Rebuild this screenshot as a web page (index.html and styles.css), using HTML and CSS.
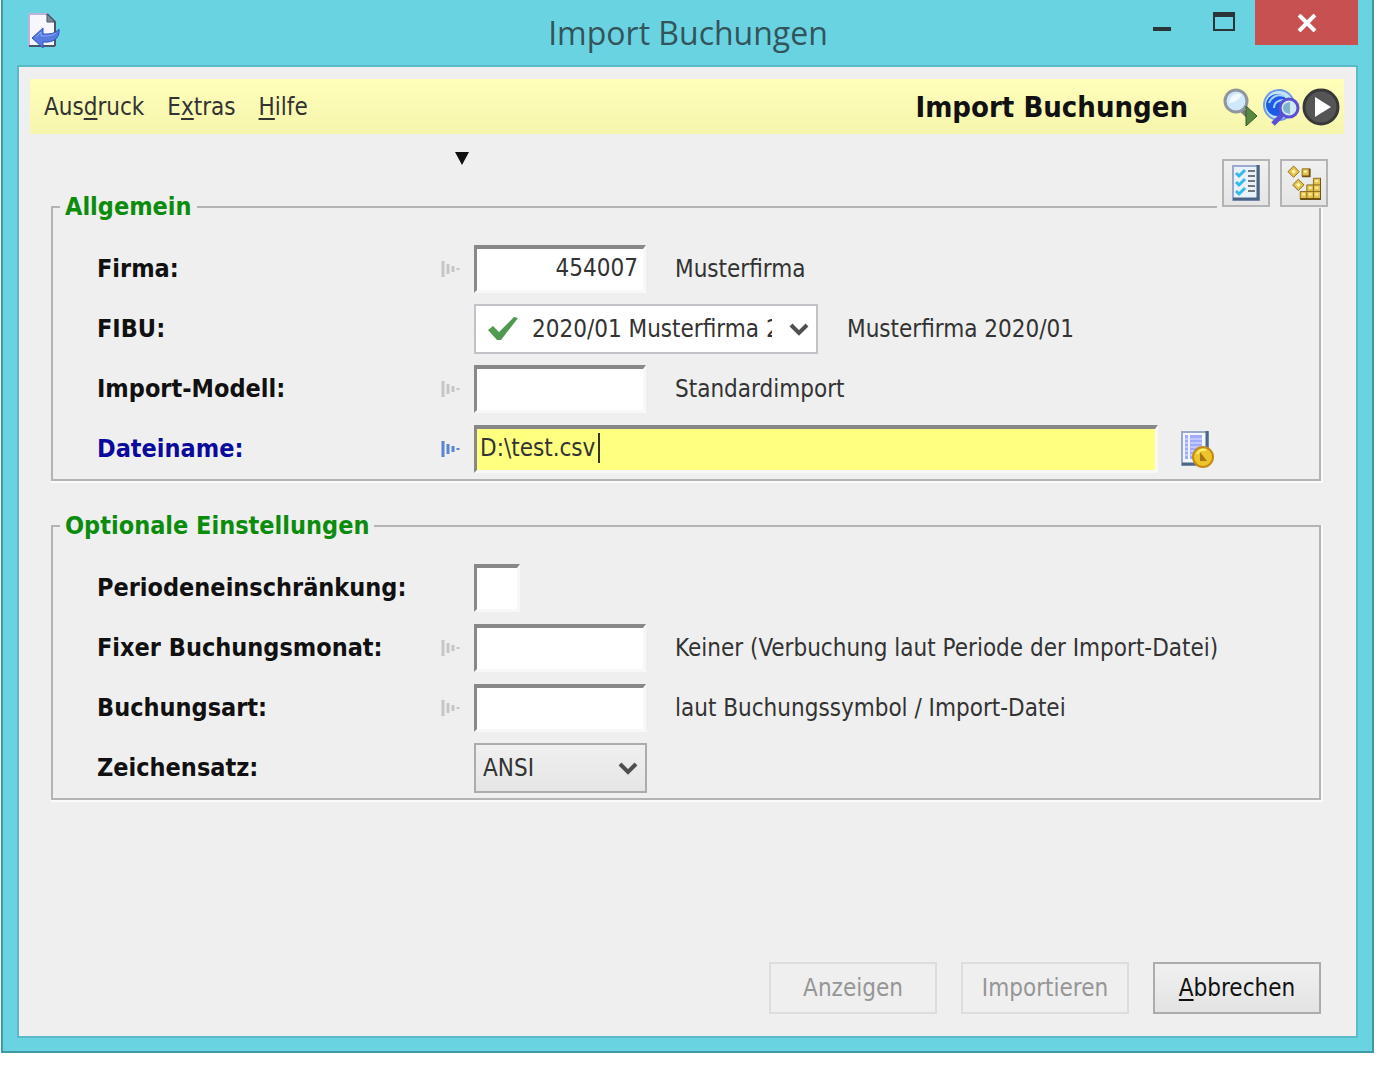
FILE: index.html
```html
<!DOCTYPE html>
<html lang="de">
<head>
    <meta charset="UTF-8">
    <meta name="viewport" content="width=device-width, initial-scale=1.0">
    <title>Import Buchungen</title>
    <link rel="stylesheet" href="styles.css">
</head>
<body>
    <!-- shared symbols -->
    <svg class="symbols" aria-hidden="true">
        <symbol id="hint" viewBox="0 0 20 20">
            <path d="M3 2v16M8 5v10M13 7v6M18 9v2" stroke="currentColor" stroke-width="3" fill="none"/>
        </symbol>
        <symbol id="chevron" viewBox="0 0 20 16">
            <path d="M2 3l8 8 8-8" stroke="#505050" stroke-width="4" fill="none"/>
        </symbol>
    </svg>

    <div class="window">
        <header class="titlebar">
            <svg class="app-icon" viewBox="0 0 34 38">
                <path d="M2 2h18l8 8v24H2z" fill="#f6f6fc" stroke="#b9b4dc" stroke-width="2"/>
                <path d="M20 2l8 8v24" fill="none" stroke="#48566a" stroke-width="2"/>
                <path d="M20 2v8h8z" fill="#7d8896" stroke="#48566a"/>
                <path d="M2 34h26" fill="none" stroke="#48566a" stroke-width="2"/>
                <path d="M5 26l11-10v6c7 0 12 0 16-5c1 9-5 14-16 13v6z" fill="#587be2" stroke="#3155b8"/>
                <path d="M9 25l5-5v4c6 0 11 0 15-3" fill="none" stroke="#8ba8f6"/>
            </svg>
            <h1 class="window-title">Import Buchungen</h1>
            <div class="window-controls">
                <button class="control minimize" aria-label="Minimieren">
                    <svg viewBox="0 0 20 6"><path d="M1 1h18v4H1z" fill="#2b3437"/></svg>
                </button>
                <button class="control maximize" aria-label="Maximieren">
                    <svg viewBox="0 0 24 20"><path d="M2 2v16h20V2z" fill="none" stroke="#2b3437" stroke-width="2"/><path d="M1 0h22v5H1z" fill="#2b3437"/></svg>
                </button>
                <button class="control close" aria-label="Schließen">
                    <svg viewBox="0 0 20 18"><path d="M2 1l16 16M18 1L2 17" stroke="#fff" stroke-width="4"/></svg>
                </button>
            </div>
        </header>

        <main class="client">
            <div class="menubar">
                <nav class="menu">
                    <a href="#">Aus<u>d</u>ruck</a>
                    <a href="#">E<u>x</u>tras</a>
                    <a href="#"><u>H</u>ilfe</a>
                </nav>
                <h2 class="form-title">Import Buchungen</h2>
                <div class="menu-icons">
                    <button class="icon-btn" aria-label="Suche starten">
                        <svg viewBox="0 0 38 38">
                            <path d="M20 22l7 7" stroke="#77797c" stroke-width="5"/>
                            <circle cx="14" cy="13" r="11" fill="#cfe8fb" stroke="#8f969d" stroke-width="3"/>
                            <path d="M7 15c1-7 6-10 13-9c-2 5-6 8-13 9z" fill="#f1faff"/>
                            <path d="M24 18l11 10-11 10z" fill="#568a40" stroke="#38542f"/>
                        </svg>
                    </button>
                    <button class="icon-btn" aria-label="Globale Suche">
                        <svg viewBox="0 0 38 38">
                            <circle cx="17" cy="17" r="15" fill="#c4e4f6" stroke="#6d9be6" stroke-width="2"/>
                            <circle cx="15" cy="17" r="11" fill="#1c5be8"/>
                            <path d="M7 15c2-6 8-9 15-7M12 20c0-5 4-8 10-8" stroke="#a9d2fb" stroke-width="2" fill="none"/>
                            <path d="M20 27L11 36" stroke="#5b50d4" stroke-width="5"/>
                            <circle cx="27" cy="20" r="9" fill="#cfe8f2" stroke="#5a50d2" stroke-width="3"/>
                            <path d="M28 14v12c-5-1-7-3-7-6s2-5 7-6z" fill="#7fb0cd"/>
                        </svg>
                    </button>
                    <button class="icon-btn" aria-label="Ausführen">
                        <svg viewBox="0 0 38 38">
                            <circle cx="19" cy="19" r="17" fill="#555" stroke="#383838" stroke-width="3"/>
                            <path d="M13 9l16 10-16 10z" fill="#fff"/>
                        </svg>
                    </button>
                </div>
            </div>

            <div class="toolbar-row">
                <span class="marker"></span>
                <div class="toolbar">
                    <button class="tool" aria-label="Checkliste">
                        <svg viewBox="0 0 28 36">
                            <path d="M1 1h26v34H1z" fill="#e9f2fb" stroke="#9ba8cf" stroke-width="2"/>
                            <path d="M26 0v34H1" fill="none" stroke="#4a6486" stroke-width="3"/>
                            <path d="M4 8l3 3 6-6M4 17l3 3 6-6M4 26l3 3 6-6" stroke="#34b9ec" stroke-width="3" fill="none"/>
                            <path d="M16 6h7M16 11h7M16 16h7M16 21h7M16 26h7" stroke="#74777c" stroke-width="2"/>
                        </svg>
                    </button>
                    <button class="tool" aria-label="Bausteine">
                        <svg viewBox="0 0 36 38">
                            <g fill="#e3c350" stroke="#8b6a1d">
                                <path d="M7 1l6 6-6 6-6-6z"/>
                                <path d="M12 15l6 6-6 6-6-6z"/>
                                <path d="M16 4h8v8h-8z"/>
                                <path d="M28 14h8v22H14v-8h7v-7h7z"/>
                            </g>
                            <path d="M28 21h8M21 28h15M21 28v8M28 21v15" stroke="#8b6a1d"/>
                            <path d="M30 17h3M30 24h3M23 24h3M16 31h3M23 31h3M30 31h3M18 7h3M5 7h4M7 5v4M10 21h4M12 19v4" stroke="#fff6ae" stroke-width="2"/>
                            <path d="M24 4v8h-8M36 14v22H14" fill="none" stroke="#6d5216" stroke-width="2"/>
                        </svg>
                    </button>
                </div>
            </div>

            <form class="form">
                <fieldset class="group">
                    <legend>Allgemein</legend>
                    <div class="row">
                        <label for="firma">Firma:</label>
                        <svg class="hint"><use href="#hint"/></svg>
                        <input class="field number" id="firma" type="text" value="454007">
                        <span class="note">Musterfirma</span>
                    </div>
                    <div class="row">
                        <label for="fibu">FIBU:</label>
                        <span class="hint"></span>
                        <div class="select-wrap fibu">
                            <svg class="check" viewBox="0 0 30 26"><path d="M0 14l5-4 6 6L26 1l4 1-17 22h-4z" fill="#4f9a50"/></svg>
                            <select id="fibu">
                                <option>2020/01 Musterfirma 2020/01</option>
                            </select>
                            <svg class="chevron"><use href="#chevron"/></svg>
                        </div>
                        <span class="note">Musterfirma 2020/01</span>
                    </div>
                    <div class="row">
                        <label for="modell">Import-Modell:</label>
                        <svg class="hint"><use href="#hint"/></svg>
                        <input class="field" id="modell" type="text">
                        <span class="note">Standardimport</span>
                    </div>
                    <div class="row active">
                        <label for="datei">Dateiname:</label>
                        <svg class="hint"><use href="#hint"/></svg>
                        <div class="file-wrap">
                            <input class="field" id="datei" type="text" value="D:\test.csv">
                            <span class="caret"></span>
                        </div>
                        <button type="button" class="browse" aria-label="Datei auswählen">
                            <svg viewBox="0 0 34 38">
                                <path d="M2 2h26v33H2z" fill="#f3f6ff" stroke="#9aaac4" stroke-width="2"/>
                                <path d="M27 1v33H2" fill="none" stroke="#4c6688" stroke-width="3"/>
                                <path d="M5 5h3v24H5zM10 5h12v24H10z" fill="#a0aaff"/>
                                <path d="M5 9h17M5 13h17M5 17h17M5 21h17M5 25h17" stroke="#e2e6ff"/>
                                <circle cx="23" cy="27" r="10" fill="#edc52b" stroke="#c28b17" stroke-width="2"/>
                                <path d="M20 22v9h7z" fill="#a97415"/>
                                <path d="M17 24c2-4 5-5 9-4" stroke="#fff27a" stroke-width="2" fill="none"/>
                            </svg>
                        </button>
                    </div>
                </fieldset>

                <fieldset class="group">
                    <legend>Optionale Einstellungen</legend>
                    <div class="row">
                        <label for="periode">Periodeneinschränkung:</label>
                        <span class="hint"></span>
                        <input class="field tiny" id="periode" type="text">
                    </div>
                    <div class="row">
                        <label for="monat">Fixer Buchungsmonat:</label>
                        <svg class="hint"><use href="#hint"/></svg>
                        <input class="field" id="monat" type="text">
                        <span class="note">Keiner (Verbuchung laut Periode der Import-Datei)</span>
                    </div>
                    <div class="row">
                        <label for="art">Buchungsart:</label>
                        <svg class="hint"><use href="#hint"/></svg>
                        <input class="field" id="art" type="text">
                        <span class="note">laut Buchungssymbol / Import-Datei</span>
                    </div>
                    <div class="row">
                        <label for="zeichen">Zeichensatz:</label>
                        <span class="hint"></span>
                        <div class="select-wrap charset">
                            <select id="zeichen">
                                <option>ANSI</option>
                            </select>
                            <svg class="chevron"><use href="#chevron"/></svg>
                        </div>
                    </div>
                </fieldset>

                <div class="actions">
                    <button type="button" class="btn" disabled>Anzeigen</button>
                    <button type="button" class="btn" disabled>Importieren</button>
                    <button type="button" class="btn"><u>A</u>bbrechen</button>
                </div>
            </form>
        </main>
    </div>
</body>
</html>
```
FILE: styles.css
```css
:root {
    --frame: #69d3e2;
    --frame-dark: #4199a6;
    --frame-inner: #5bbac8;
    --surface: #efefef;
    --line: #b4b4b4;
    --text: #333333;
}

* {
    margin: 0;
    padding: 0;
    box-sizing: border-box;
}

body {
    background: #ffffff;
    color: var(--text);
    font-family: "DejaVu Sans Condensed", "DejaVu Sans", Tahoma, sans-serif;
    font-size: 24px;
    line-height: 32px;
}

button,
input,
select {
    font: inherit;
    color: inherit;
}

u {
    text-decoration-thickness: 2px;
    text-underline-offset: 3px;
}

.symbols {
    position: absolute;
    width: 0;
    height: 0;
}

.window {
    display: flex;
    flex-direction: column;
    min-height: calc(100vh - 15px);
    margin: 0 6px 0 1px;
    padding: 0 16px 15px;
    background: var(--frame);
    border: 2px solid var(--frame-dark);
    border-top: none;
}

/* Title bar */
.titlebar {
    display: flex;
    justify-content: space-between;
    align-items: flex-start;
    height: 67px;
    padding-left: 8px;
}

.app-icon {
    width: 34px;
    height: 38px;
    margin-top: 12px;
    margin-right: 184px;
}

.window-title {
    font-family: "Open Sans", "Noto Sans", sans-serif;
    font-size: 32px;
    font-weight: normal;
    line-height: 66px;
    color: #34545c;
}

.window-controls {
    display: flex;
    margin-right: -2px;
}

.control {
    display: flex;
    justify-content: center;
    width: 62px;
    height: 45px;
    background: none;
    border: none;
}

.minimize svg {
    width: 20px;
    height: 6px;
    margin-top: 26px;
}

.maximize svg {
    width: 24px;
    height: 20px;
    margin-top: 12px;
}

.close {
    width: 103px;
    background: #c75050;
}

.close svg {
    width: 20px;
    height: 18px;
    margin-top: 14px;
}

/* Client area */
.client {
    display: flex;
    flex: 1;
    flex-direction: column;
    padding: 12px 12px 12px 11px;
    background: var(--surface);
    outline: 2px solid var(--frame-inner);
}

.menubar {
    display: flex;
    align-items: center;
    height: 55px;
    padding: 0 4px 0 14px;
    background: linear-gradient(#ffffbb, #f5f5ad);
}

.menu {
    display: flex;
    flex: 1;
    gap: 23px;
}

.menu a {
    color: var(--text);
    text-decoration: none;
}

.form-title {
    font-size: 29px;
    color: #111111;
}

.menu-icons {
    display: flex;
    gap: 2px;
    margin-left: 34px;
}

.icon-btn,
.browse {
    display: flex;
    background: none;
    border: none;
}

.icon-btn svg {
    width: 38px;
    height: 38px;
}

.toolbar-row {
    position: relative;
    height: 57px;
    padding: 18px 0 0 425px;
}

.marker {
    display: block;
    width: 0;
    border: 7px solid transparent;
    border-top: 13px solid #111111;
    border-bottom: none;
}

/* the tools lie over the top border of the first group */
.toolbar {
    position: absolute;
    top: 25px;
    right: 16px;
    display: flex;
    gap: 10px;
    padding: 0 0 1px 5px;
    background: var(--surface);
}

.tool {
    display: flex;
    justify-content: center;
    align-items: center;
    width: 48px;
    height: 48px;
    background: linear-gradient(#f0f0f0, #e5e5e5);
    border: 2px solid var(--line);
}

.tool svg {
    width: 34px;
    height: 36px;
}

/* Form */
.form {
    display: flex;
    flex: 1;
    flex-direction: column;
    padding: 0 23px 10px 21px;
}

.group {
    margin-bottom: 29px;
    padding: 16px 0 0 44px;
    border: 2px solid var(--line);
    box-shadow: 1px 1px 0 1px #fafafa;
}

.group legend {
    margin-left: -37px;
    padding: 0 5px;
    color: #0c8c0c;
    font-size: 25px;
    font-weight: bold;
}

.row {
    display: flex;
    align-items: center;
    height: 60px;
}

.row label {
    width: 343px;
    color: #111111;
    font-size: 25px;
    font-weight: bold;
}

.hint {
    width: 20px;
    height: 20px;
    margin-right: 14px;
    color: #c6c6c6;
}

.field {
    width: 172px;
    height: 48px;
    padding: 0 6px 4px 3px;
    background: #ffffff;
    border: 3px solid #f8f8f8;
    border-top: 4px solid #888888;
    border-left-color: #888888;
    outline: none;
}

.number {
    padding-right: 5px;
    text-align: right;
}

.tiny {
    width: 46px;
}

.note {
    margin-left: 29px;
    white-space: nowrap;
}

.active label {
    color: #0a0a9c;
}

.active .hint {
    color: #5b83d6;
}

.file-wrap {
    position: relative;
    flex: 1;
}

.file-wrap .field {
    width: 100%;
    background: #ffff80;
}

.caret {
    position: absolute;
    top: 8px;
    left: 124px;
    width: 2px;
    height: 30px;
    background: #333333;
}

.browse {
    margin: 0 105px 0 22px;
}

.browse svg {
    width: 34px;
    height: 38px;
}

.select-wrap {
    position: relative;
}

.select-wrap select {
    width: 100%;
    height: 50px;
    appearance: none;
    border: 2px solid #acacac;
    border-radius: 0;
}

.fibu {
    width: 344px;
}

.fibu select {
    padding: 0 44px 0 56px;
    background: #ffffff;
    border-color: #c2c2c8;
}

.charset {
    width: 173px;
}

.charset select {
    padding: 0 40px 0 7px;
    background: linear-gradient(#f0f0f0, #e5e5e5);
}

.check {
    position: absolute;
    top: 12px;
    left: 14px;
    width: 30px;
    height: 26px;
}

.chevron {
    position: absolute;
    top: 18px;
    right: 9px;
    width: 20px;
    height: 16px;
    pointer-events: none;
}

/* Buttons */
.actions {
    display: flex;
    justify-content: flex-end;
    gap: 24px;
    margin-top: auto;
}

.btn {
    width: 168px;
    height: 52px;
    background: linear-gradient(#f0f0f0, #e3e3e3);
    border: 2px solid #acacac;
    color: #111111;
}

.btn:disabled {
    background: var(--surface);
    border-color: #dddddd;
    color: #969696;
}
```
